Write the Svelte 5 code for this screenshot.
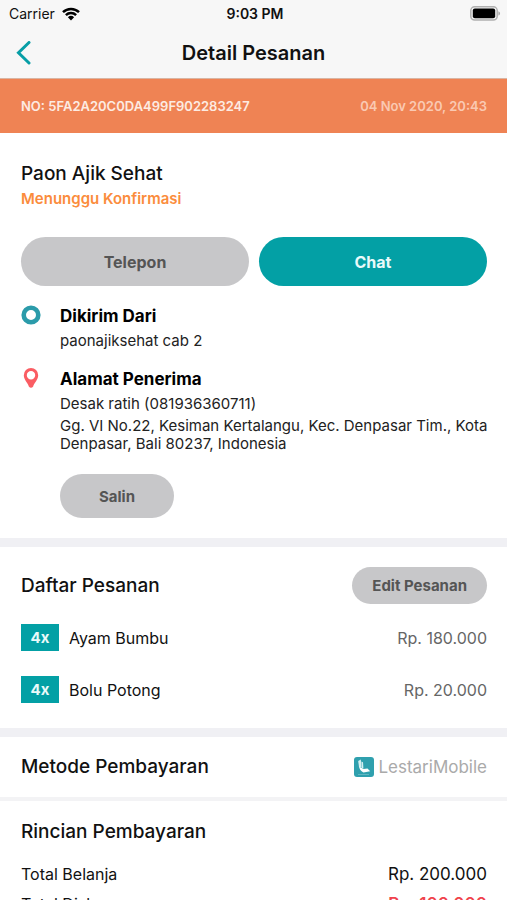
<script>
  const order = {
    id: '5FA2A20C0DA499F902283247',
    date: '04 Nov 2020, 20:43',
    store: 'Paon Ajik Sehat',
    status: 'Menunggu Konfirmasi',
    from: 'paonajiksehat cab 2',
    receiver: 'Desak ratih (081936360711)',
    address: 'Gg. VI No.22, Kesiman Kertalangu, Kec. Denpasar Tim., Kota Denpasar, Bali 80237, Indonesia',
    payment: 'LestariMobile'
  };

  const items = [
    { qty: 4, name: 'Ayam Bumbu', price: 180000 },
    { qty: 4, name: 'Bolu Potong', price: 20000 }
  ];

  const summary = [
    { label: 'Total Belanja', amount: 200000 },
    { label: 'Total Diskon', amount: 100000, discount: true }
  ];

  function rupiah(value) {
    return 'Rp. ' + String(value).replace(/\B(?=(\d{3})+$)/g, '.');
  }

  function copyAddress() {
    navigator.clipboard?.writeText(order.address);
  }
</script>

<div class="screen">
  <header>
    <div class="status-bar">
      <span class="carrier">
        Carrier
        <svg width="18" height="14" viewBox="0 0 18 14" aria-hidden="true">
          <g fill="none" stroke="#000" stroke-width="2.5">
            <path d="M1 5.2a11.4 11.4 0 0 1 16 0" />
            <path d="M3.9 8.2a7.3 7.3 0 0 1 10.2 0" />
          </g>
          <path d="M9 13.4 5.9 10.3a4.5 4.5 0 0 1 6.2 0z" />
        </svg>
      </span>
      <span class="time">9:03 PM</span>
      <span class="battery">
        <svg width="31" height="15" viewBox="0 0 31 15" aria-hidden="true">
          <rect x="0.8" y="0.8" width="26.4" height="13.2" rx="3.8" fill="#f7f7f7" stroke="#b0b0b0" stroke-width="1.5" />
          <rect x="2.8" y="2.6" width="22.4" height="9.6" rx="2" />
          <path d="M28.4 5.2C30.6 6 30.6 8.800 28.4 9.600z" fill="#aaa" />
        </svg>
      </span>
    </div>
    <div class="nav-bar">
      <button class="back" aria-label="Kembali">
        <svg width="15" height="24" viewBox="0 0 15 24" aria-hidden="true">
          <path d="M13 1.500 2.500 11.800 13 22" fill="none" stroke="#079ea6" stroke-width="3" stroke-linecap="round" />
        </svg>
      </button>
      <h1>Detail Pesanan</h1>
    </div>
  </header>

  <main>
    <div class="order-bar">
      <span>NO: {order.id}</span>
      <time>{order.date}</time>
    </div>

    <section class="store">
      <h2>{order.store}</h2>
      <p class="order-status">{order.status}</p>
      <div class="actions">
        <button class="pill">Telepon</button>
        <button class="pill primary">Chat</button>
      </div>

      <div class="place">
        <svg width="20" height="20" viewBox="0 0 20 20" aria-hidden="true">
          <circle cx="10" cy="10" r="7.300" fill="none" stroke="#2b9baa" stroke-width="4.600" />
        </svg>
        <div>
          <h3>Dikirim Dari</h3>
          <p>{order.from}</p>
        </div>
      </div>

      <div class="place">
        <svg width="20" height="20" viewBox="0 0 20 20" aria-hidden="true">
          <path
            fill="#fa5d63"
            fill-rule="evenodd"
            d="M10 0a7.200 7.200 0 0 0-7.200 7.200C2.800 12 7.200 15 7.800 18.500q2.200 2.400 4.400 0C12.800 15 17.200 12 17.200 7.200A7.200 7.200 0 0 0 10 0zm0 3a4.200 4.200 0 1 1 0 8.400A4.200 4.200 0 0 1 10 3z"
          />
        </svg>
        <div>
          <h3>Alamat Penerima</h3>
          <p>{order.receiver}</p>
          <p>{order.address}</p>
          <button class="pill copy" onclick={copyAddress}>Salin</button>
        </div>
      </div>
    </section>

    <section class="items">
      <div class="row">
        <h2>Daftar Pesanan</h2>
        <button class="pill edit">Edit Pesanan</button>
      </div>
      <ul>
        {#each items as item}
          <li class="row">
            <span class="qty">{item.qty}x</span>
            <span class="name">{item.name}</span>
            <span class="price">{rupiah(item.price)}</span>
          </li>
        {/each}
      </ul>
    </section>

    <section class="payment row">
      <h2>Metode Pembayaran</h2>
      <span class="method">
        <svg width="20" height="20" viewBox="0 0 20 20" aria-hidden="true">
          <rect width="20" height="20" rx="3" fill="#2fa0ae" />
          <path d="M4.200 4 6.800 2.600l.8 8L5 10z" fill="#d5eff1" />
          <path d="M7.400 4.500 9 5.200l.4 6.300-1.600-.6z" fill="#d5eff1" />
          <path d="M5 9.500 9.500 12l4-.4 2.700 2.700-6.700 1.200Q6 14 5 9.500z" fill="#fff" />
          <path d="M4 17.500h11" stroke="#6fbcc5" stroke-width="0.800" />
        </svg>
        {order.payment}
      </span>
    </section>

    <section class="summary">
      <h2>Rincian Pembayaran</h2>
      <dl>
        {#each summary as line}
          <div class="row">
            <dt>{line.label}</dt>
            <dd class:discount={line.discount}>{rupiah(line.amount)}</dd>
          </div>
        {/each}
      </dl>
    </section>
  </main>
</div>

<style>
  :global(body) {
    margin: 0;
    background: #fff;
    color: #111;
    font-family: Inter, 'Liberation Sans', sans-serif;
  }

  .screen {
    display: flex;
    flex-direction: column;
    height: 100vh;
  }

  header {
    flex-shrink: 0;
    background: #f7f7f7;
  }

  h1,
  h2,
  h3,
  p,
  ul,
  dl,
  dd {
    margin: 0;
    padding: 0;
  }

  button {
    border: none;
    cursor: pointer;
    font-family: inherit;
  }

  .status-bar {
    display: grid;
    grid-template-columns: 1fr auto 1fr;
    align-items: center;
    height: 27px;
    padding: 0 6px 0 9px;
    font-size: 14px;
  }

  .carrier {
    display: flex;
    align-items: center;
    gap: 7px;
  }

  .time {
    font-weight: 600;
  }

  .battery {
    display: flex;
    justify-content: flex-end;
  }

  .nav-bar {
    display: grid;
    grid-template-columns: 48px 1fr 48px;
    align-items: center;
    height: 51px;
  }

  .back {
    display: flex;
    padding: 0 0 0 16px;
    background: none;
  }

  h1 {
    text-align: center;
    font-size: 20px;
    font-weight: 600;
  }

  main {
    flex: 1;
    overflow-y: auto;
    scrollbar-width: none;
  }

  .order-bar {
    display: flex;
    justify-content: space-between;
    align-items: center;
    height: 54px;
    padding: 0 20px 0 21px;
    border-top: 1px solid #d9b5a3;
    background: #ef8354;
    color: #fdebe2;
    font-size: 13px;
    font-weight: 600;
  }

  .order-bar time {
    color: #fac9b2;
  }

  section {
    padding: 0 20px 0 21px;
  }

  h2 {
    font-size: 19px;
    font-weight: 500;
    line-height: 24px;
  }

  h3 {
    font-size: 17px;
    font-weight: 700;
    line-height: 24px;
    color: #000;
  }

  .row {
    display: flex;
    align-items: center;
    justify-content: space-between;
  }

  .store {
    padding-top: 29px;
    padding-bottom: 20px;
  }

  .order-status {
    color: #fb8c3c;
    font-size: 15px;
    font-weight: 600;
    line-height: 26px;
  }

  .actions {
    display: flex;
    gap: 10px;
    margin: 25px 0 18px;
  }

  .pill {
    border-radius: 30px;
    background: #c7c7c9;
    color: #555;
    font-size: 15px;
    font-weight: 700;
  }

  .actions .pill {
    flex: 1;
    height: 49px;
    font-size: 16px;
  }

  .pill.primary {
    background: #03a0a5;
    color: #e9fafa;
  }

  .place {
    display: flex;
    gap: 19px;
    margin: 0 -10px 17px 0;
  }

  .place:last-child {
    margin-bottom: 0;
  }

  .place svg {
    flex-shrink: 0;
    margin-top: 1px;
  }

  .place p {
    margin-top: 4px;
    color: #222;
    font-size: 15px;
    line-height: 18px;
  }

  .copy {
    height: 44px;
    margin-top: 21px;
    padding: 0 39px;
  }

  .items {
    padding-top: 20px;
    padding-bottom: 25px;
    border-top: 9px solid #f0f0f4;
  }

  .edit {
    height: 37px;
    padding: 0 20px;
  }

  ul {
    display: grid;
    gap: 25px;
    margin-top: 20px;
    list-style: none;
  }

  .qty {
    width: 38px;
    background: #03a0a5;
    color: #e9fafa;
    font-size: 15px;
    font-weight: 700;
    line-height: 27px;
    text-align: center;
  }

  .name {
    flex: 1;
    margin-left: 10px;
    font-size: 16px;
  }

  .price {
    color: #666;
    font-size: 16px;
  }

  .payment {
    height: 60px;
    border-top: 9px solid #f0f0f4;
    border-bottom: 4px solid #f3f3f5;
  }

  .method {
    display: flex;
    align-items: center;
    gap: 4px;
    color: #aaa;
    font-size: 17px;
  }

  .summary {
    padding-top: 19px;
    padding-bottom: 24px;
  }

  dl {
    display: grid;
    gap: 6px;
    margin-top: 18px;
    font-size: 16px;
    line-height: 24px;
  }

  dd {
    font-size: 17px;
  }

  .discount {
    color: #f0434c;
    font-weight: 600;
  }
</style>
